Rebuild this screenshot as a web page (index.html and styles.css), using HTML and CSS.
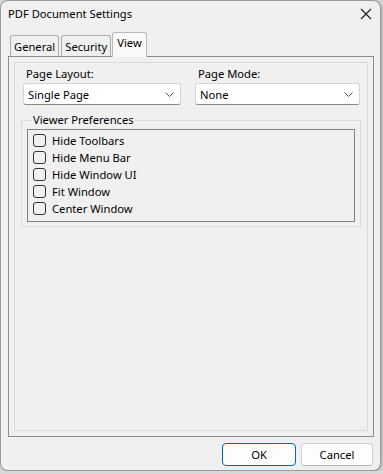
FILE: index.html
```html
<!DOCTYPE html>
<html lang="en">
<head>
    <meta charset="UTF-8">
    <title>PDF Document Settings</title>
    <link rel="stylesheet" href="styles.css">
</head>
<body>
    <div class="dialog">
        <div class="titlebar">
            <span class="title">PDF Document Settings</span>
            <svg class="close" width="12" height="12" viewBox="0 0 12 12">
                <path d="M1 1 L11 11 M11 1 L1 11" stroke="#1a1a1a" stroke-width="1.1" fill="none"/>
            </svg>
        </div>
        <div class="tabs">
            <div class="tab">General</div>
            <div class="tab">Security</div>
            <div class="tab active">View</div>
        </div>
        <div class="panel">
            <div class="page">
                <div class="fields">
                    <div class="field">
                        <label class="label">Page Layout:</label>
                        <div class="combo">
                            <span>Single Page</span>
                            <svg class="chevron" width="9" height="5" viewBox="0 0 9 5">
                                <path d="M0.5 0.5 L4.5 4.5 L8.5 0.5" stroke="#505050" fill="none"/>
                            </svg>
                        </div>
                    </div>
                    <div class="field">
                        <label class="label">Page Mode:</label>
                        <div class="combo">
                            <span>None</span>
                            <svg class="chevron" width="9" height="5" viewBox="0 0 9 5">
                                <path d="M0.5 0.5 L4.5 4.5 L8.5 0.5" stroke="#505050" fill="none"/>
                            </svg>
                        </div>
                    </div>
                </div>
                <fieldset class="group">
                    <legend>Viewer Preferences</legend>
                    <div class="listbox">
                        <label class="check"><span class="box"></span>Hide Toolbars</label>
                        <label class="check"><span class="box"></span>Hide Menu Bar</label>
                        <label class="check"><span class="box"></span>Hide Window UI</label>
                        <label class="check"><span class="box"></span>Fit Window</label>
                        <label class="check"><span class="box"></span>Center Window</label>
                    </div>
                </fieldset>
            </div>
        </div>
        <div class="buttons">
            <button class="btn default">OK</button>
            <button class="btn">Cancel</button>
        </div>
    </div>
</body>
</html>
```

FILE: styles.css
```css
html
{
    background-color: #d8d8d8;
}
body
{
    margin: 0;
    font-family: "Noto Sans", "Open Sans", sans-serif;
    font-size: 11.2px;
    color: #000;
}
.dialog
{
    width: 381px;
    height: 471px;
    box-sizing: border-box;
    background-color: #f0f0f0;
    border: 1px solid #9a9a9a;
    border-radius: 8px;
    box-shadow: 1px 1px 3px rgba(0, 0, 0, 0.25);
    display: flex;
    flex-direction: column;
}
.titlebar
{
    height: 27px;
    display: flex;
    align-items: center;
    justify-content: space-between;
    padding: 0 8px 0 7px;
}
.title
{
    font-size: 11.2px;
    margin-top: -2px;
}
.close
{
    margin-top: -2px;
}
.tabs
{
    display: flex;
    align-items: flex-end;
    height: 24px;
    padding-left: 9px;
    margin-top: 4px;
    position: relative;
    z-index: 1;
}
.tab
{
    height: 21px;
    box-sizing: border-box;
    border: 1px solid #adadad;
    border-bottom: none;
    border-radius: 3px 3px 0 0;
    background-color: #f0f0f0;
    padding: 1px 3px 0 3px;
    line-height: 19px;
    margin-right: 2px;
}
.tab.active
{
    height: 25px;
    background-color: #f9f9f9;
    margin-right: 0;
    margin-left: -1px;
    margin-bottom: -1px;
    padding: 0 4px;
    line-height: 20px;
    border-color: #b8b8b8;
}
.panel
{
    margin: 0 6px 0 7px;
    height: 381px;
    box-sizing: border-box;
    border: 1px solid #8c8c8c;
    padding: 5px;
}
.page
{
    height: 100%;
    box-sizing: border-box;
    border: 1px solid #dadada;
    padding: 1px 6px 0 6px;
}
.fields
{
    display: grid;
    grid-template-columns: 158px 1fr;
    column-gap: 14px;
    padding: 0 1px 0 2px;
}
.label
{
    display: block;
    height: 19px;
    line-height: 19px;
    padding-left: 3px;
}
.combo
{
    height: 22px;
    box-sizing: border-box;
    background-color: #fff;
    border: 1px solid #d5d5d5;
    border-bottom-color: #8a8a8a;
    border-radius: 3px;
    display: flex;
    align-items: center;
    justify-content: space-between;
    padding: 0 6px 0 4px;
}
.group
{
    margin: 8px 0 0 0;
    padding: 2px 5px 4px 5px;
    border: 1px solid #dcdcdc;
    height: 114px;
    box-sizing: border-box;
}
.group legend
{
    padding: 0 1px;
    margin-left: 5px;
    line-height: 14px;
}
.listbox
{
    border: 1px solid #828282;
    height: 93px;
    box-sizing: border-box;
    padding: 2px 5px;
    display: flex;
    flex-direction: column;
}
.check
{
    display: flex;
    align-items: center;
    height: 17px;
}
.box
{
    width: 11px;
    height: 11px;
    border: 1px solid #333;
    border-radius: 3px;
    margin-right: 6px;
}
.buttons
{
    display: flex;
    justify-content: flex-end;
    gap: 5px;
    padding: 6px 7px 0 0;
}
.btn
{
    font-family: inherit;
    font-size: 11.2px;
    height: 23px;
    width: 72px;
    background-color: #fdfdfd;
    border: 1px solid #d0d0d0;
    border-bottom-color: #b8b8b8;
    border-radius: 4px;
    padding: 0;
}
.btn.default
{
    width: 74px;
    border: 1px solid #0067c0;
}
```
